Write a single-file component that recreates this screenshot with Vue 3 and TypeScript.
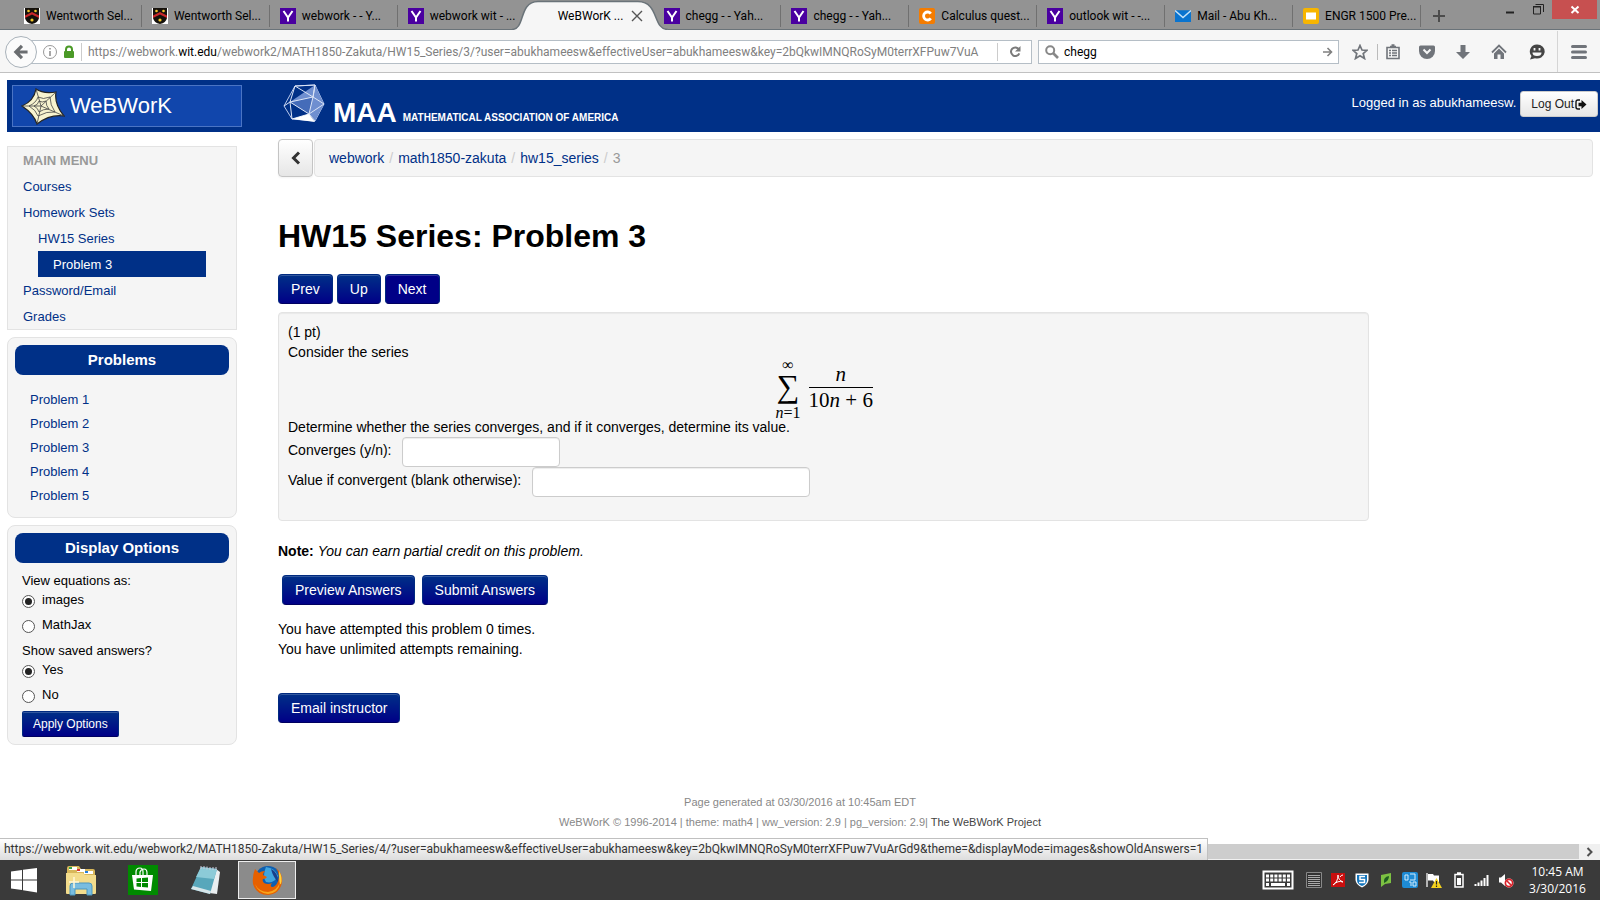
<script setup lang="ts">
import { ref } from 'vue'

type TabIcon = 'crest' | 'yahoo' | 'chegg' | 'mail' | 'slides' | 'none'
interface Tab {
  title: string
  icon: TabIcon
  active?: boolean
}

const tabs: Tab[] = [
  { title: 'Wentworth Sel...', icon: 'crest' },
  { title: 'Wentworth Sel...', icon: 'crest' },
  { title: 'webwork - - Y...', icon: 'yahoo' },
  { title: 'webwork wit - ...', icon: 'yahoo' },
  { title: 'WeBWorK ...', icon: 'none', active: true },
  { title: 'chegg - - Yah...', icon: 'yahoo' },
  { title: 'chegg - - Yah...', icon: 'yahoo' },
  { title: 'Calculus quest...', icon: 'chegg' },
  { title: 'outlook wit - -...', icon: 'yahoo' },
  { title: 'Mail - Abu Kh...', icon: 'mail' },
  { title: 'ENGR 1500 Pre...', icon: 'slides' },
]

const urlTail =
  '/webwork2/MATH1850-Zakuta/HW15_Series/3/?user=abukhameesw&effectiveUser=abukhameesw&key=2bQkwIMNQRoSyM0terrXFPuw7VuA'
const statusUrl =
  'https://webwork.wit.edu/webwork2/MATH1850-Zakuta/HW15_Series/4/?user=abukhameesw&effectiveUser=abukhameesw&key=2bQkwIMNQRoSyM0terrXFPuw7VuArGd9&theme=&displayMode=images&showOldAnswers=1'

const address = ref('')
const search = ref('chegg')
const problems = [1, 2, 3, 4, 5]
const crumbs = ['webwork', 'math1850-zakuta', 'hw15_series']
const display = ref('images')
const saved = ref('yes')
const converges = ref('')
const value = ref('')
</script>

<template>
  <div class="screen">
    <header class="tabbar">
      <nav class="tabs" aria-label="Browser tabs">
        <button v-for="(t, i) in tabs" :key="i" type="button" class="tab" :class="{ active: t.active, bare: t.active || tabs[i + 1]?.active }">
          <svg v-if="t.active" class="tab-shape" viewBox="0 0 156 30" preserveAspectRatio="none">
            <path d="M0 30V29.500C14 29 6 2 26 1.500H126C148 2 140 29 156 29.500V30Z" fill="#f6f6f6" />
            <path d="M0 29.500C14 29 6 2 26 1.500H126C148 2 140 29 156 29.500" fill="none" stroke="#6a7379" stroke-width="1.500" />
          </svg>
          <span class="tab-icon">
            <svg v-if="t.icon === 'crest'" viewBox="0 0 16 16">
              <path d="M0 0H16V16H0Z" fill="#fff" /><path d="M1 0H15V10Q14 15 8 16Q2 15 1 10Z" fill="#15110c" />
              <path d="M1 10L8 6.500L15 10V7.500L8 4L1 7.500Z" fill="#c8282b" />
              <circle cx="4.500" cy="3" r="1.300" fill="#f3c62b" /><circle cx="11.500" cy="3" r="1.300" fill="#f3c62b" /><circle cx="8" cy="12" r="1.600" fill="#f3c62b" />
            </svg>
            <svg v-else-if="t.icon === 'yahoo'" viewBox="0 0 16 16">
              <path d="M0 0H16V16H0Z" fill="#4a00a0" />
              <path d="M3.500 3L8 9.500L12.500 3M8 9V13.500" fill="none" stroke="#fff" stroke-width="2" />
            </svg>
            <svg v-else-if="t.icon === 'chegg'" viewBox="0 0 16 16">
              <rect width="16" height="16" rx="2" fill="#f57c00" />
              <path d="M11.800 5.600A4 4 0 1 0 11.800 10.400" fill="none" stroke="#fff" stroke-width="2.800" />
            </svg>
            <svg v-else-if="t.icon === 'mail'" viewBox="0 0 16 16">
              <path d="M0 2.500H16V14H0Z" fill="#0a74cf" /><path d="M0 2.500L8 9.500L16 2.500" fill="#0a74cf" stroke="#c6e2f7" stroke-width="1.500" />
            </svg>
            <svg v-else-if="t.icon === 'slides'" viewBox="0 0 16 16">
              <rect width="16" height="16" rx="2" fill="#f7b500" /><path d="M3 4.500H13V11.500H3Z" fill="#fff" />
            </svg>
          </span>
          <span class="tab-title">{{ t.title }}</span>
          <svg v-if="t.active" class="tab-close" viewBox="0 0 12 12"><path d="M1 1L11 11M11 1L1 11" stroke="#555" stroke-width="1.400" /></svg>
        </button>
      </nav>
      <button type="button" class="newtab" aria-label="New tab">
        <svg viewBox="0 0 12 12"><path d="M6 0V12M0 6H12" stroke="#4c4c4c" stroke-width="2" /></svg>
      </button>
      <div class="winbtns">
        <button type="button" aria-label="Minimize"><svg viewBox="0 0 28 19"><path d="M10 12.500H18" stroke="#222" stroke-width="2" /></svg></button>
        <button type="button" aria-label="Restore"><svg viewBox="0 0 28 19"><path d="M9.500 7H16.500V14H9.500Z" fill="none" stroke="#222" /><path d="M9 6.500H17M11.500 4.500H19.500V12" fill="none" stroke="#222" /></svg></button>
        <button type="button" class="close" aria-label="Close"><svg viewBox="0 0 28 19"><path d="M10.500 6.500L17.500 13M17.500 6.500L10.500 13" stroke="#fff" stroke-width="2" /></svg></button>
      </div>
    </header>

    <div class="toolbar">
      <button type="button" class="back" aria-label="Back">
        <svg viewBox="0 0 32 32"><path d="M23 16H11.500M17 9.500L10.500 16L17 22.500" fill="none" stroke="#6a6d70" stroke-width="3.400" /></svg>
      </button>
      <div class="field address">
        <svg class="info" viewBox="0 0 16 16"><circle cx="8" cy="8" r="6.500" fill="none" stroke="#999" /><path d="M8 7V12M8 4V5.500" stroke="#8a8a8a" stroke-width="1.500" /></svg>
        <svg class="lock" viewBox="0 0 12 14"><path d="M3 7V4.500A3 3 0 0 1 9 4.500V7" fill="none" stroke="#4b9a27" stroke-width="2" /><rect x="1" y="6" width="10" height="7" rx="1" fill="#4b9a27" /></svg>
        <div class="url"><span>https://webwork.</span><b>wit.edu</b><span>{{ urlTail }}</span><input v-model="address" type="text" aria-label="Address" /></div>
        <button type="button" class="reload" aria-label="Reload">
          <svg viewBox="0 0 14 14"><path d="M10.800 4.200A4.300 4.300 0 1 0 11.300 8.300" fill="none" stroke="#7b7b7b" stroke-width="2" /><path d="M12.500 1V6.500H7Z" fill="#7b7b7b" /></svg>
        </button>
      </div>
      <div class="field search">
        <svg viewBox="0 0 14 14"><circle cx="5.200" cy="5.200" r="4" fill="none" stroke="#888" stroke-width="2" /><path d="M8 8L13 13" stroke="#888" stroke-width="2.600" /></svg>
        <input v-model="search" type="text" aria-label="Search" />
        <button type="button" class="go" aria-label="Go"><svg viewBox="0 0 10 10"><path d="M0 5H8.500M4.500 1L8.500 5L4.500 9" fill="none" stroke="#808080" stroke-width="1.600" /></svg></button>
      </div>
      <div class="tools">
        <button type="button" aria-label="Bookmark"><svg viewBox="0 0 16 16"><path d="M8 1.500L10 6L15 6.300L11.200 9.500L12.500 14.500L8 11.700L3.500 14.500L4.800 9.500L1 6.300L6 6Z" fill="none" stroke="#70747a" stroke-width="1.700" /></svg></button>
        <button type="button" class="rule" aria-label="Bookmarks list"><svg viewBox="0 0 16 16"><path d="M2 3.500H14V14.500H2Z" fill="none" stroke="#70747a" stroke-width="1.600" /><path d="M5 2.500H11M6.500 1H9.500M4 6.500H6M7 6.500H12M4 9H6M7 9H12M4 11.500H6M7 11.500H12" stroke="#70747a" stroke-width="1.600" /></svg></button>
        <button type="button" aria-label="Pocket"><svg viewBox="0 0 16 16"><path d="M1.500 1.500H14.500Q16 1.500 16 3V7A8 8 0 0 1 0 7V3Q0 1.500 1.500 1.500Z" fill="#70747a" /><path d="M4.500 5.500L8 9L11.500 5.500" fill="none" stroke="#f6f6f6" stroke-width="2" /></svg></button>
        <button type="button" aria-label="Downloads"><svg viewBox="0 0 16 16"><path d="M5.500 1H10.500V8H15L8 15L1 8H5.500Z" fill="#70747a" /></svg></button>
        <button type="button" aria-label="Home"><svg viewBox="0 0 16 16"><path d="M1 8.500L8 1.500L15 8.500" fill="none" stroke="#70747a" stroke-width="1.800" /><path d="M8 4.500L13 9.500V15H9.500V10.500H6.500V15H3V9.500Z" fill="#70747a" /></svg></button>
        <button type="button" class="hello" aria-label="Hello"><svg viewBox="0 0 16 16"><path d="M8 .5A7.500 7 0 1 1 6 14.200L1 15.500L2.500 12A7 7 0 0 1 8 .5Z" fill="#454545" /><path d="M5.500 4V6.500M10.500 4V6.500" stroke="#f6f6f6" stroke-width="1.800" /><path d="M3.500 8.500H12.500A4.500 3.500 0 0 1 3.500 8.500Z" fill="#f6f6f6" /></svg></button>
        <button type="button" class="menu" aria-label="Menu"><svg viewBox="0 0 16 16"><path d="M1.500 2.500H14.500M1.500 8H14.500M1.500 13.500H14.500" stroke="#70747a" stroke-width="3" stroke-linecap="round" /></svg></button>
      </div>
    </div>

    <div class="page">
      <div class="masthead">
        <a class="brand" href="#">
          <svg viewBox="0 0 44 37">
            <path d="M15 1Q22 6 35 4Q33 16 43 28Q29 26 16 36Q13 26 1 18Q13 13 15 1Z" fill="#f7f3cf" stroke="#222" stroke-width="1.200" />
            <path d="M15 1L20 18L35 4M20 18L43 28M20 18L16 36M20 18L1 18M17 9Q22 12 29 9Q29 17 34 24Q26 23 17 28Q15 22 8 18Q15 15 17 9ZM18 13Q21 15 25 13Q25 18 28 21Q22 21 18 24Q17 20 13 18Q17 17 18 13Z" fill="none" stroke="#444" stroke-width=".8" />
          </svg>
          <span>WeBWorK</span>
        </a>
        <a class="maa" href="#" aria-label="Mathematical Association of America">
          <svg viewBox="0 0 42 40">
            <path d="M12 2L32 1L41 20L32 37L9 35L1 22Z" fill="none" stroke="#b9c9ec" />
            <path d="M32 1L41 20L32 37L26 30L7 18Z" fill="#6f8fd0" /><path d="M7 18L30 13L26 30Z" fill="#456cb9" />
            <path d="M12 2L30 13L32 1M30 13L41 20L26 30L32 37M30 13L26 30L7 18ZM12 2L7 18L1 22M7 18L9 35L26 30M12 2L32 1M32 1L30 13" fill="none" stroke="#dce5f7" />
            <path d="M9 35L26 30L32 38Z" fill="#fff" />
          </svg>
          <strong>MAA</strong><span>MATHEMATICAL ASSOCIATION OF AMERICA</span>
        </a>
        <div class="login">
          <span>Logged in as abukhameesw.</span>
          <button type="button">Log Out<svg viewBox="0 0 12 11"><path d="M5 1H3Q1 1 1 3V8Q1 10 3 10H5" fill="none" stroke="#111" stroke-width="1.400" /><path d="M3.500 3.800H6.500V1L11.500 5.500L6.500 10V7.200H3.500Z" fill="#111" /></svg></button>
        </div>
      </div>

      <div class="columns">
        <aside>
          <nav class="mainmenu" aria-label="Main menu">
            <h2>MAIN MENU</h2>
            <a href="#">Courses</a>
            <a href="#">Homework Sets</a>
            <a href="#" class="sub">HW15 Series</a>
            <a href="#" class="current">Problem 3</a>
            <a href="#">Password/Email</a>
            <a href="#">Grades</a>
          </nav>
          <nav class="panel problems" aria-label="Problems">
            <h2>Problems</h2>
            <ul><li v-for="n in problems" :key="n"><a href="#">Problem {{ n }}</a></li></ul>
          </nav>
          <form class="panel" @submit.prevent>
            <h2>Display Options</h2>
            <div class="options">
              <p>View equations as:</p>
              <label><input v-model="display" type="radio" name="display" value="images" /><span>images</span></label>
              <label><input v-model="display" type="radio" name="display" value="mathjax" /><span>MathJax</span></label>
              <p>Show saved answers?</p>
              <label><input v-model="saved" type="radio" name="saved" value="yes" /><span>Yes</span></label>
              <label><input v-model="saved" type="radio" name="saved" value="no" /><span>No</span></label>
              <button type="submit" class="btn small">Apply Options</button>
            </div>
          </form>
        </aside>

        <main>
          <div class="crumbrow">
            <button type="button" aria-label="Up one level"><svg viewBox="0 0 10 14"><path d="M8 1.500L2.500 7L8 12.500" fill="none" stroke="#333" stroke-width="3" /></svg></button>
            <ol><li v-for="c in crumbs" :key="c"><a href="#">{{ c }}</a><i>/</i></li><li>3</li></ol>
          </div>
          <h1>HW15 Series: Problem 3</h1>
          <div class="buttons">
            <button type="button" class="btn">Prev</button><button type="button" class="btn">Up</button><button type="button" class="btn hover">Next</button>
          </div>
          <section class="problem">
            <p>(1 pt)</p>
            <p>Consider the series</p>
            <div class="math">
              <div class="sum"><span class="lim">∞</span><span class="sigma">∑</span><span class="lim"><em>n</em>=1</span></div>
              <div class="frac"><span><em>n</em></span><span>10<em>n</em> + 6</span></div>
            </div>
            <p>Determine whether the series converges, and if it converges, determine its value.</p>
            <div class="answer"><label for="conv">Converges (y/n):</label><input id="conv" v-model="converges" type="text" class="short" /></div>
            <div class="answer"><label for="val">Value if convergent (blank otherwise):</label><input id="val" v-model="value" type="text" class="long" /></div>
          </section>
          <p class="note"><b>Note:</b> <em>You can earn partial credit on this problem.</em></p>
          <div class="buttons submit">
            <button type="button" class="btn">Preview Answers</button><button type="button" class="btn">Submit Answers</button>
          </div>
          <p>You have attempted this problem 0 times.</p>
          <p>You have unlimited attempts remaining.</p>
          <button type="button" class="btn email">Email instructor</button>
        </main>
      </div>
      <footer>
        <p>Page generated at 03/30/2016 at 10:45am EDT</p>
        <p>WeBWorK © 1996-2014 | theme: math4 | ww_version: 2.9 | pg_version: 2.9| <a href="#">The WeBWorK Project</a></p>
      </footer>
      <div class="status">{{ statusUrl }}</div>
      <div class="hscroll"><span></span><button type="button" aria-label="Scroll right"><svg viewBox="0 0 8 10"><path d="M1.500 1L5.500 5L1.500 9" fill="none" stroke="#505050" stroke-width="2" /></svg></button></div>
    </div>

    <div class="taskbar">
      <button type="button" aria-label="Start"><svg viewBox="0 0 32 32"><path d="M3 7.500L14 6V15.500H3ZM15 5.800L29 4V15.500H15ZM3 16.500H14V26L3 24.500ZM15 16.500H29V28.500L15 26.300Z" fill="#fff" /></svg></button>
      <button type="button" aria-label="File Explorer"><svg viewBox="0 0 32 32">
        <path d="M2 4Q2 2 4 2H14L16 5H28Q30 5 30 7V29H2Z" fill="#d8b75a" /><path d="M4 3H12V6H4Z" fill="#fff" /><path d="M4 3H7V5H4Z" fill="#3aa648" /><path d="M12 5H20V8H12Z" fill="#fff" /><path d="M12 5H15V7H12Z" fill="#d33" /><path d="M19 7H28V10H19Z" fill="#fff" /><path d="M20 7H23V9H20Z" fill="#2780d8" />
        <path d="M1 9H18L20 11H31V29Q31 30 30 30H2Q1 30 1 29Z" fill="#f3dc8c" /><path d="M5 31V22Q5 19 8 19H24Q27 19 27 22V31H22V25H10V31Z" fill="#79bde0" stroke="#4d97bf" />
        <path d="M9 13V24M4 18H14" stroke="#fff8d8" stroke-width="1.500" />
      </svg></button>
      <button type="button" aria-label="Store"><svg viewBox="0 0 32 32"><path d="M1 1H31V31H1Z" fill="#008a00" /><path d="M9 11V8Q9 4 13 4Q16 4 16 8V11M13 11V8Q14 5 17 5Q20 5 20 9V11" fill="none" stroke="#fff" stroke-width="1.200" /><path d="M5 11H26L24 27L7 25.500Z" fill="#fff" /><path d="M9.500 14.500L14 14V18H9.500ZM15 14L21 13.500V18H15ZM9.500 19H14V23L9.500 22.500ZM15 19H21V23.500L15 23Z" fill="#008a00" /></svg></button>
      <button type="button" aria-label="Notepad"><svg viewBox="0 0 32 32"><path d="M27 5L31 8L28 30L20 29Z" fill="#e9eef0" /><path d="M12 3L28 5L21 30L2 25Z" fill="#58a7bb" /><path d="M12 3L28 5L25 15L7 13Z" fill="#8ccbd8" /><path d="M2 25L21 30L22 27L4 22Z" fill="#d7e6ea" /><path d="M12 2V5M15 2V5M18 2.500V5.500M21 3V6M24 3V6M27 3V6" stroke="#ccd" /></svg></button>
      <button type="button" class="running" aria-label="Firefox"><svg viewBox="0 0 32 32">
        <circle cx="17" cy="15.500" r="13.500" fill="#0f5fb0" /><path d="M15 3Q24 4 27 12Q23 20 15 18Q11 12 15 3Z" fill="#40a5df" /><path d="M20 5Q27 8 27 18Q22 13 20 5Z" fill="#1a3f8a" />
        <path d="M4 5L8 9Q10 7 14 7Q12 9 12 11L16 13Q15 15 12 15Q11 17 13 19Q17 21 21 19Q18 23 22 23Q27 21 28 13Q28 8 25 4Q32 10 31 18Q29 30 17 31Q5 31 2 20Q1 12 4 5Z" fill="#e66000" /><path d="M4 20Q8 28 17 28Q26 27 29 18Q28 29 17 30Q7 29 4 20Z" fill="#f8a51b" /><path d="M28 7Q32 13 30 20Q28 22 28 7Z" fill="#ffd23e" />
      </svg></button>
      <div class="tray">
        <svg class="keyboard" viewBox="0 0 32 20"><rect x="1.500" y="1.500" width="29" height="17" fill="none" stroke="#fff" stroke-width="2" /><path d="M4 6H28M4 10H28" stroke="#fff" stroke-width="3" stroke-dasharray="3 1.200" /><path d="M4 14.500H7M9 14.500H23M25 14.500H28" stroke="#fff" stroke-width="3" /></svg>
        <span><svg viewBox="0 0 16 16"><path d="M.5 .5H15.500V15.500H.5Z" fill="#333" stroke="#888" /><path d="M2 3.500H14M2 5.500H14M2 7.500H14M2 9.500H14M2 11.500H14M2 13.500H14" stroke="#aaa" /></svg></span>
        <span><svg viewBox="0 0 16 16"><path d="M1 1H15V15H1Z" fill="#c80f0f" /><path d="M3 13Q8 10 8 3Q8 8 13 10Q8 8 3 13M10 5Q11 3 13 3" fill="none" stroke="#fff" /></svg></span>
        <span><svg viewBox="0 0 16 16"><path d="M1.500 1.500H14.500V8Q14 13 8 15.500Q2 13 1.500 8Z" fill="#fff" /><path d="M3 3H13V8Q13 12 8 14Q3 12 3 8Z" fill="#1476bd" /><path d="M11 4.500H6V7.500H10.500V10.500H5" fill="none" stroke="#fff" stroke-width="1.500" /></svg></span>
        <span><svg viewBox="0 0 16 16"><path d="M3 3L13 1V11L7 12L3 15Z" fill="#7cc142" /><path d="M6 11Q5 5 11 4Q11 9 6 11Z" fill="#1d5c20" /></svg></span>
        <span><svg viewBox="0 0 16 16"><rect width="16" height="16" rx="2" fill="#1e8bd4" /><path d="M3 3H6V8H3ZM8 2H13V8H8M7 10H9V14M11 10H14V14H11Z" fill="none" stroke="#d4ecfb" /></svg></span>
        <span><svg viewBox="0 0 16 16"><path d="M1 1V15" stroke="#ddd" stroke-width="1.500" /><path d="M2 2H7L8 3.500H13V10H8L7 8.500H2Z" fill="#fff" /><path d="M10.500 6L16 16H5Z" fill="#f5d21d" /><path d="M10.500 9V12.500M10.500 13.500V15" stroke="#222" stroke-width="1.200" /></svg></span>
        <span><svg viewBox="0 0 16 16"><path d="M7 1H11M5 2.500H13V15H5Z" fill="none" stroke="#fff" stroke-width="1.500" /><path d="M7 6H11V13H7Z" fill="#fff" /></svg></span>
        <span><svg viewBox="0 0 16 16"><path d="M1.500 14V12M4.500 14V10.500M7.500 14V8.500M10.500 14V6M13.500 14V3" stroke="#fff" stroke-width="2" /></svg></span>
        <span><svg viewBox="0 0 16 16"><path d="M1 5.500H3L7 2V14L3 10.500H1Z" fill="#fff" /><circle cx="11" cy="11" r="4.500" fill="#fff" /><circle cx="11" cy="11" r="3.600" fill="none" stroke="#d8222a" stroke-width="1.700" /><path d="M8.500 8.500L13.500 13.500" stroke="#d8222a" stroke-width="1.600" /></svg></span>
      </div>
      <div class="clock"><span>10:45 AM</span><span>3/30/2016</span></div>
    </div>
  </div>
</template>

<style>
html, body { margin: 0; }
</style>

<style scoped>
* { box-sizing: border-box; }
.screen { min-height: 100vh; display: flex; flex-direction: column; background: #fff; color: #000; font: 14px/20px "Liberation Sans", Arial, sans-serif; overflow: hidden; }
button { font: inherit; color: inherit; border: 0; background: none; padding: 0; margin: 0; }
input { font: inherit; margin: 0; }
p, h1, h2, ul, ol { margin: 0; padding: 0; }
ul, ol { list-style: none; }
a { color: #003087; text-decoration: none; }
svg { display: block; flex: none; }

.tabbar { height: 30px; display: flex; padding-left: 14px; background: #939393; border-bottom: 1px solid #6a7379; font: 12px/16px Roboto, sans-serif; }
.tabs { flex: 0 1 1407px; display: flex; }
.tab { position: relative; flex: 1; min-width: 0; display: flex; align-items: center; gap: 6px; padding: 2px 0 0 10px; text-align: left; white-space: nowrap; }
.tab:not(.bare)::after { content: ""; position: absolute; right: 0; top: 5px; width: 1px; height: 22px; background: #707070; }
.tab-icon { position: relative; width: 16px; height: 16px; flex: none; }
.tab-title { position: relative; flex: 1; }
.tab.active { z-index: 1; }
.tab-shape { position: absolute; left: -14px; top: 0; width: calc(100% + 28px); height: 30px; }
.tab-close { position: relative; width: 12px; height: 12px; margin-right: 11px; }
.newtab { width: 36px; display: grid; place-items: center; padding-top: 2px; }
.newtab svg { width: 12px; height: 12px; }
.winbtns { margin: 0 3px 0 auto; display: flex; height: 19px; }
.winbtns svg { width: 28px; height: 19px; }
.winbtns button { width: 28px; display: flex; justify-content: center; }
.winbtns .close { width: 45px; background: #c75050; }

.toolbar { height: 43px; display: flex; align-items: center; padding: 1px 0 0 5px; background: #f6f6f6; border-bottom: 1px solid #c1c1c1; font: 12px/20px Roboto, sans-serif; }
.back { position: relative; z-index: 1; width: 32px; height: 32px; flex: none; border: 1px solid #a9b2ba; border-radius: 50%; background: #fbfbfb; }
.field { height: 24px; display: flex; align-items: center; background: #fff; border: 1px solid #b5bec6; white-space: nowrap; }
.address { flex: 1; margin-left: -6px; padding-left: 10px; min-width: 0; }
.info { width: 16px; height: 16px; }
.lock { width: 12px; height: 14px; margin: 0 6px 0 5px; }
.url { position: relative; flex: 1; min-width: 0; overflow: hidden; border-left: 1px solid #ccc; padding-left: 6px; height: 18px; line-height: 18px; color: #808080; }
.url b { font-weight: 400; color: #000; }
.url input { position: absolute; inset: 0; width: 100%; border: 0; background: transparent; outline: 0; }
.reload { width: 34px; height: 18px; border-left: 1px solid #ccc; display: grid; place-items: center; }
.reload svg { width: 14px; height: 14px; }
.search { width: 301px; margin-left: 6px; padding: 0 5px 0 6px; gap: 5px; }
.search > svg { width: 14px; height: 14px; }
.search input { flex: 1; min-width: 0; border: 0; padding: 0; outline: 0; background: none; color: #000; }
.go svg { width: 10px; height: 10px; }
.tools { display: flex; align-self: stretch; margin-left: 4px; }
.tools button { position: relative; width: 36px; display: grid; place-items: center; }
.tools button svg { width: 16px; height: 16px; }
.tools button:first-child { width: 34px; }
.tools .rule { width: 32px; }
.tools .rule::before { content: ""; position: absolute; left: 0; top: 13px; width: 1px; height: 16px; background: #bbb; }
.tools .hello { width: 40px; }
.tools .menu { width: 43px; border-left: 1px solid #d5d5d5; }

.page { flex: 1; display: flex; flex-direction: column; position: relative; }
.masthead { margin: 7px 0 0 7px; height: 52px; background: #003087; display: flex; padding: 5px 2px 5px 5px; }
.brand { width: 230px; display: flex; align-items: center; gap: 5px; padding-left: 8px; background: #1146ac; border: 1px solid #4a74c4; color: #fff; font-size: 22px; }
.brand svg { width: 44px; height: 37px; }
.maa { display: flex; align-items: flex-end; margin-left: 41px; color: #fff; font-weight: 700; }
.maa svg { width: 42px; height: 40px; margin-bottom: 3px; }
.maa strong { margin-left: 8px; font-size: 28px; line-height: 28px; }
.maa span { margin-left: 6px; font-size: 10px; line-height: 18px; }
.login { margin-left: auto; display: flex; align-items: flex-start; gap: 4px; color: #fff; font-size: 12px; }
.login > span { padding-top: 8px; font-size: 13px; }
.login button { height: 26px; margin-top: 6px; padding: 0 10px; display: flex; align-items: center; gap: 1px; color: #222; border: 1px solid #ccc; border-radius: 3px; background: linear-gradient(#fff, #e6e6e6); }
.login svg { width: 12px; height: 11px; }

.columns { flex: 1; display: grid; grid-template-columns: 230px 1fr; column-gap: 41px; padding: 7px 7px 0; }
aside { padding-top: 7px; display: flex; flex-direction: column; gap: 7px; font-size: 13px; }
.mainmenu { background: #f5f5f5; border: 1px solid #e3e3e3; display: flex; flex-direction: column; line-height: 28px; }
.mainmenu h2 { height: 26px; padding-left: 15px; font-size: 13px; line-height: 28px; color: #999; }
.mainmenu a { height: 26px; padding-left: 15px; }
.mainmenu .sub { padding-left: 30px; }
.mainmenu .current { margin: 0 30px; padding-left: 15px; background: #003087; color: #fff; }
.panel { background: #f5f5f5; border: 1px solid #e3e3e3; border-radius: 8px; padding: 7px; }
.panel h2 { height: 30px; border-radius: 8px; background: #003087; color: #fff; font-size: 15px; line-height: 30px; text-align: center; }
.problems ul { padding: 13px 0 2px 15px; line-height: 24px; }
.options { padding: 8px 0 0 7px; display: flex; flex-direction: column; align-items: flex-start; }
.options p { line-height: 20px; }
.options label { display: flex; align-items: flex-start; gap: 7px; height: 25px; line-height: 18px; }
.options input { appearance: none; width: 13px; height: 13px; margin-top: 4px; border: 1px solid #555; border-radius: 50%; background: #fff; display: grid; place-items: center; }
.options input:checked::before { content: ""; width: 7px; height: 7px; border-radius: 50%; background: #222; }
.btn { height: 30px; padding: 0 12px; border: 1px solid #002a80; border-bottom-color: #000060; border-radius: 4px; background: linear-gradient(#003087, #000087); color: #fff; box-shadow: inset 0 1px 0 rgba(255, 255, 255, .2); }
.btn.hover { background: #000087; }
.btn.small { height: 26px; padding: 0 10px; border-radius: 2px; font-size: 12px; }

.crumbrow { display: flex; gap: 1px; }
.crumbrow button { width: 35px; height: 38px; display: grid; place-items: center; border: 1px solid #c4c4c4; border-radius: 4px; background: linear-gradient(#fff, #e6e6e6); box-shadow: 0 1px 2px rgba(0, 0, 0, .05); }
.crumbrow svg { width: 10px; height: 14px; }
.crumbrow ol { flex: 1; display: flex; align-items: center; padding-left: 14px; background: #f5f5f5; border: 1px solid #e3e3e3; border-radius: 4px; color: #999; }
.crumbrow i { font-style: normal; color: #ccc; padding: 0 5px; }
h1 { margin-top: 39px; font-size: 32px; line-height: 40px; }
.buttons { display: flex; gap: 4px; margin-top: 18px; }
.problem { width: 83%; margin-top: 8px; padding: 9px 9px 23px; background: #f5f5f5; border: 1px solid #e3e3e3; border-radius: 4px; box-shadow: inset 0 1px 1px rgba(0, 0, 0, .05); }
.math { margin-top: -3px; height: 58px; display: flex; justify-content: center; gap: 7px; font: 21px/23px "Liberation Serif", serif; }
.sum { width: 27px; display: flex; flex-direction: column; align-items: center; }
.lim { font-size: 16px; line-height: 11px; white-space: nowrap; }
.sigma { font-size: 32px; line-height: 32px; padding-bottom: 5px; }
.frac { display: flex; flex-direction: column; text-align: center; padding-top: 4px; white-space: nowrap; }
.frac span:first-child { border-bottom: 1px solid #000; padding-bottom: 1px; }
.frac span:last-child { padding-top: 1px; }
.answer { display: flex; gap: 11px; line-height: 26px; }
.answer input { height: 30px; padding: 4px 6px; border: 1px solid #ccc; border-radius: 4px; background: #fff; box-shadow: inset 0 1px 1px rgba(0, 0, 0, .075); }
.short { width: 158px; }
.long { width: 278px; }
.note { margin-top: 20px; }
.submit { margin: 14px 0 14px 4px; gap: 7px; }
.email { margin-top: 34px; }
footer { padding-bottom: 12px; text-align: center; font-size: 11px; color: #888; }
footer a { color: #444; }
.status { position: absolute; left: 0; bottom: 0; height: 22px; padding: 0 4px; border: 1px solid #c0c0c0; border-width: 1px 1px 0 0; background: linear-gradient(#fff, #ddd); color: #333; font: 12px/21px Roboto, sans-serif; white-space: nowrap; }
.hscroll { height: 16px; display: flex; background: #f0f0f0; }
.hscroll span { flex: 1; height: 15px; background: #cdcdcd; }
.hscroll button { width: 21px; display: grid; place-items: center; }
.hscroll svg { width: 8px; height: 10px; }

.taskbar { height: 40px; display: flex; align-items: center; background: #3a3a3a; color: #fff; font: 12px/17px "Open Sans", sans-serif; }
.taskbar > button { width: 58px; height: 38px; margin-right: 4px; display: grid; place-items: center; }
.taskbar > button:first-child { width: 48px; }
.taskbar > button svg { width: 32px; height: 32px; }
.taskbar > .running { border: 1px solid #eee; background: #8b8b8b; }
.tray { margin-left: auto; display: flex; align-items: center; }
.tray span { width: 24px; display: grid; place-items: center; }
.tray span svg { width: 16px; height: 16px; }
.keyboard { width: 32px; height: 20px; margin-right: 8px; }
.clock { width: 82px; display: flex; flex-direction: column; padding-right: 3px; text-align: center; }
</style>
